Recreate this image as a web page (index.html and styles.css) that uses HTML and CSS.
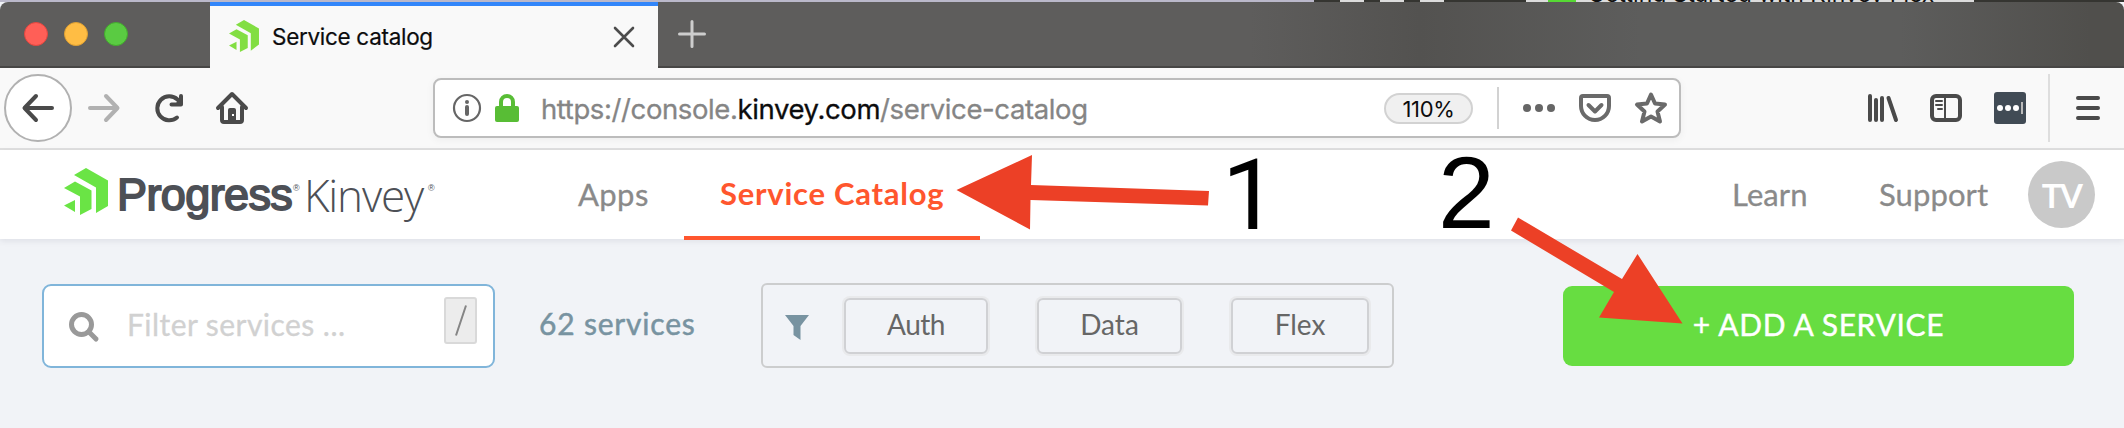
FILE: index.html
```html
<!DOCTYPE html>
<html lang="en">
<head>
<meta charset="utf-8">
<title>Service catalog</title>
<link rel="stylesheet" href="styles.css">
</head>
<body>
<div class="desktop">
  <span class="peek p1"></span><span class="peek p2"></span><span class="peek p3"></span><span class="peek p4"></span>
  <span class="peek-tab"><i class="peek-icon"></i><span class="peek-title">Getting Started with Kinvey Flex</span></span>
  <span class="peek p5"></span>
</div>
<div class="tabs">
  <div class="lights"><i class="light red"></i><i class="light amber"></i><i class="light green"></i></div>
  <div class="tab">
    <svg class="tab-icon" viewBox="0 0 44 47"><path d="M10 7 22 0 44 12.500V36L32 45V19.500ZM0 20 11 13.500 27.500 22.500V41L16 47V28.500ZM0 37.500 11 32V44Z"/></svg>
    <span class="tab-title">Service catalog</span>
    <svg class="tab-close" viewBox="0 0 20 20"><path d="M1 1 19 19M19 1 1 19"/></svg>
  </div>
  <svg class="tab-new" viewBox="0 0 28 28"><path d="M14 1.500V26.500M1.500 14H26.500"/></svg>
</div>
<div class="toolbar">
  <span class="back"><svg class="ico" viewBox="0 0 32 32"><path d="M30 16H3M14 4 2.500 16 14 28"/></svg></span>
  <svg class="ico forward" viewBox="0 0 32 32"><path d="M2 16H29M18 4 29.500 16 18 28"/></svg>
  <svg class="ico reload" viewBox="0 0 32 32"><path d="M24 25.500A12 12 0 1 1 24.500 7.500L28 11"/><path d="M28 4V12.500H18.500"/><path class="solid" d="M28 6V13H21Z"/></svg>
  <svg class="ico home" viewBox="0 0 32 32"><path d="M2 16 16 2 30 16M6 15V28Q6 30 8 30H24Q26 30 26 28V15"/><path class="solid" d="M12 30V18Q12 16 14 16H18Q20 16 20 18V30Z"/><rect class="hole" x="16" y="22" width="2" height="2"/></svg>
  <div class="address">
    <svg class="info" viewBox="0 0 30 30"><circle cx="15" cy="15" r="13"/><path d="M15 14V21"/><circle class="dot" cx="15" cy="9" r="2"/></svg>
    <svg class="lock" viewBox="0 0 24 28"><path d="M6 14V8a6 6 0 0 1 12 0V14"/><rect x="0" y="12" width="24" height="16" rx="2"/></svg>
    <span class="url">https://console.<b>kinvey.com</b>/service-catalog</span>
    <span class="zoom">110%</span>
    <span class="rule"></span>
    <svg class="more" viewBox="0 0 32 8"><circle cx="4" cy="4" r="4"/><circle cx="16" cy="4" r="4"/><circle cx="28" cy="4" r="4"/></svg>
    <svg class="ico grey pocket" viewBox="0 0 32 32"><path d="M4 4H28Q30 4 30 6V14A14 14 0 0 1 2 14V6Q2 4 4 4ZM9.500 13 16 19.500 22.500 13"/></svg>
    <svg class="ico grey star" viewBox="0 0 32 32"><path d="M16 2.500 20 11.500 30 12.500 22.500 19.500 25 29.500 16 24.500 7 29.500 9.500 19.500 2 12.500 12 11.500Z"/></svg>
  </div>
  <svg class="ico library" viewBox="0 0 32 32"><path d="M4 4V28M10 8V28M16 6V28M22.500 6 30 28"/></svg>
  <svg class="ico sidebar" viewBox="0 0 32 32"><rect x="2" y="4" width="28" height="24" rx="4"/><path class="thin" d="M15 4V28M6 9H12M6 13H12M8 17H12"/></svg>
  <svg class="ico pass" viewBox="0 0 32 32"><rect width="32" height="32" rx="3"/><circle cx="6" cy="16" r="3"/><circle cx="14" cy="16" r="3"/><circle cx="22" cy="16" r="3"/><path d="M28 10V22"/></svg>
  <span class="divider"></span>
  <svg class="menu" viewBox="0 0 24 24"><path d="M2 2H22M2 12H22M2 22H22"/></svg>
</div>
<header class="site">
  <svg class="logo" viewBox="0 0 44 47"><path d="M10 7 22 0 44 12.500V38L32 45V19.500ZM0 20 11 13.500 27.500 22.500V41L16 47V28.500ZM0 37.500 11 32V44Z"/></svg>
  <span class="brand">Progress</span><span class="reg">®</span><span class="product">Kinvey</span><span class="reg">®</span>
  <nav class="nav"><a class="link apps">Apps</a><a class="link current">Service Catalog</a></nav>
  <nav class="aside"><a class="link learn">Learn</a><a class="link support">Support</a><span class="avatar">TV</span></nav>
</header>
<main class="filters">
  <div class="search">
    <svg class="glass" viewBox="0 0 30 30"><circle cx="12.500" cy="12.500" r="10"/><path d="M20 20 27 27"/></svg>
    <span class="hint">Filter services ...</span>
    <kbd class="key"><svg viewBox="0 0 12 31"><path d="M11 .5 1 30.500"/></svg></kbd>
  </div>
  <span class="count">62 services</span>
  <div class="group">
    <svg class="funnel" viewBox="0 0 24 25"><path d="M0 0H24L15.500 11V25L8.500 20V11Z"/></svg>
    <span class="chip auth">Auth</span><span class="chip data">Data</span><span class="chip flex">Flex</span>
  </div>
  <span class="add">+ ADD A SERVICE</span>
</main>
<div class="notes">
  <span class="num one">1</span><span class="num two">2</span>
  <svg class="arrows" viewBox="0 0 2124 428"><path d="M956.500 190 1032 155 1031 185 1209 191 1208 205.500 1030.500 200 1030 229.500ZM1518 217.500 1622 279 1637.500 254 1682.500 323.500 1599 317.500 1614 292 1511 230.500Z"/></svg>
</div>
</body>
</html>
```
FILE: styles.css
```css
* { box-sizing: border-box; }
body { margin: 0; width: 2124px; height: 428px; overflow: hidden; background: #f1f3f7; font-family: Lato, sans-serif; position: relative; white-space: nowrap; }
svg { display: block; flex: none; overflow: visible; }

.desktop { height: 2px; overflow: hidden; display: flex; background: linear-gradient(90deg, #bab8ca 1314px, #dcdcdc 1314px); padding-left: 1314px; }
.peek { height: 2px; flex: none; background: #353531; }
.p1 { width: 26px; }
.p2 { width: 16px; margin-left: 24px; }
.p3 { width: 16px; margin-left: 24px; }
.p4 { width: 82px; margin-left: 24px; }
.p5 { flex: 1; }
.peek-tab { display: flex; width: 448px; height: 2px; padding-left: 22px; }
.peek-icon { width: 28px; height: 2px; background: #56d934; }
.peek-title { font: 23px/28px Inter, sans-serif; margin: -20px 0 0 12px; color: #111; }

.tabs { height: 66px; display: flex; align-items: center; background: linear-gradient(90deg, #5e5d5c 0, #5e5d5c 1250px, #535250 1420px, #5d5d5c 1640px, #5d5d5c 1900px, #504f4c 2090px); border-bottom: 2px solid #474645; border-top-left-radius: 8px; border-top-right-radius: 8px; }
.lights { width: 210px; padding-left: 24px; display: flex; gap: 16px; }
.light { width: 24px; height: 24px; border-radius: 50%; }
.red { background: #ff5f57; border: 1px solid #e2463f; }
.amber { background: #ffbd44; border: 1px solid #dfa032; }
.green { background: #5acb42; border: 1px solid #43ab2d; }
.tab { width: 448px; height: 66px; margin-bottom: -2px; background: #f9f9f9; border-top: 4px solid #3286fa; display: flex; align-items: center; padding: 0 24px 0 19px; }
.tab-icon { width: 30px; height: 32px; fill: #82de42; margin-top: -3px; }
.tab-title { width: 341px; margin-left: 13px; font: 22.500px/30px Inter, sans-serif; letter-spacing: -.3px; color: #0c0c0d; -webkit-text-stroke: .2px; }
.tab-close { width: 20px; height: 20px; margin-left: 1px; stroke: #4c4c4c; stroke-width: 2.600; stroke-linecap: round; }
.tab-new { width: 28px; height: 28px; margin-left: 20px; stroke: #cdcdcd; stroke-width: 3; stroke-linecap: round; }

.toolbar { height: 82px; background: #f9f9f9; border-bottom: 2px solid #e0e0e0; display: flex; align-items: center; padding-left: 4px; }
.ico { width: 32px; height: 32px; fill: none; stroke: #4a4a4a; stroke-width: 4; stroke-linecap: round; stroke-linejoin: round; }
.ico .solid { fill: #4a4a4a; stroke: none; }
.ico .hole { fill: #fff; stroke: none; }
.ico .thin { stroke-width: 2; }
.back { width: 68px; height: 68px; border-radius: 50%; border: 2px solid #b1b1b1; background: #fff; display: flex; align-items: center; justify-content: center; }
.forward { margin-left: 16px; stroke: #b1b1b1; }
.reload { margin-left: 33px; }
.home { margin-left: 31px; }
.address { width: 1248px; height: 60px; margin-left: 185px; border: 2px solid #bcbcbc; border-radius: 8px; background: #fff; box-shadow: 0 2px 8px rgba(0,0,0,.05); display: flex; align-items: center; padding-left: 17px; flex: none; }
.info { width: 30px; height: 30px; fill: none; stroke: #666; stroke-width: 2.200; stroke-linecap: round; }
.info path { stroke-width: 4; }
.info .dot { fill: #666; stroke: none; }
.lock { width: 24px; height: 28px; margin-left: 13px; fill: #58bd35; }
.lock path { fill: none; stroke: #58bd35; stroke-width: 4; }
.url { width: 843px; margin: 2px 0 0 22px; font: 27.500px/36px Inter, sans-serif; letter-spacing: -.39px; color: #858585; -webkit-text-stroke: .3px; }
.url b { font-weight: 400; color: #0c0c0d; }
.zoom { width: 89px; height: 31px; border: 2px solid #d2d2d2; border-radius: 16px; background: #f0f0f0; font: 22px/28px Inter, sans-serif; letter-spacing: -.3px; color: #0c0c0d; text-align: center; }
.rule { width: 2px; height: 42px; margin-left: 24px; background: #d2d2d2; }
.more { width: 32px; height: 8px; margin-left: 24px; fill: #666; }
.grey { stroke: #6a6a6a; }
.pocket { margin-left: 24px; }
.star { margin-left: 24px; }
.library { margin-left: 185px; }
.sidebar { margin-left: 32px; }
.pass { margin-left: 32px; fill: #fff; stroke: none; }
.pass rect { fill: #414b55; }
.pass path { stroke: #bbb; stroke-width: 2; stroke-linecap: butt; }
.divider { width: 2px; height: 68px; margin-left: 22px; background: #dedede; flex: none; }
.menu { width: 24px; height: 24px; margin-left: 26px; stroke: #4a4a4a; stroke-width: 4; stroke-linecap: round; }

.site { height: 89px; background: #fff; display: flex; align-items: center; padding-left: 64px; box-shadow: 0 2px 6px rgba(60,60,90,.1); position: relative; color: #8a8a8a; font-size: 30px; line-height: 40px; }
.logo { width: 44px; height: 47px; fill: #6ae445; margin-bottom: 6px; }
.brand { width: 176px; margin-left: 9px; font: 45px/54px "Liberation Sans", sans-serif; letter-spacing: -.6px; color: #4d5056; -webkit-text-stroke: 1.800px #4d5056; }
.reg { width: 8px; font: 9px/12px "Liberation Sans", sans-serif; color: #4d5056; margin-top: -13px; }
.product { width: 124px; margin-left: 3px; font: 300 44px/54px "Open Sans", sans-serif; letter-spacing: -1.200px; color: #4d5056; }
.nav { display: flex; margin-left: 142px; height: 89px; }
.link { display: flex; align-items: center; height: 89px; padding-bottom: 2px; -webkit-text-stroke: .3px; }
.apps { width: 106px; font-size: 31px; letter-spacing: .4px; }
.current { width: 296px; height: 90px; padding: 0 0 0 36px; border-bottom: 4px solid #ff562e; color: #ff562e; font-size: 31px; font-weight: 700; letter-spacing: .75px; -webkit-text-stroke: 0; }
.aside { display: flex; align-items: center; margin-left: 752px; }
.learn { width: 147px; font-size: 31px; letter-spacing: .1px; }
.support { width: 149px; font-size: 31px; letter-spacing: .1px; }
.avatar { width: 67px; height: 67px; border-radius: 50%; background: #c9c9c9; color: #fff; font-size: 33px; letter-spacing: -1.500px; font-weight: 700; display: flex; align-items: center; justify-content: center; }

.filters { display: flex; padding: 44px 0 0 42px; font-size: 30px; line-height: 40px; }
.search { width: 453px; height: 84px; margin-top: 1px; border: 2px solid #80b5da; border-radius: 9px; background: #fff; display: flex; align-items: center; padding-left: 25px; }
.glass { width: 30px; height: 30px; margin-top: 2px; fill: none; stroke: #999; stroke-width: 5; stroke-linecap: round; }
.hint { width: 317px; margin: -4px 0 0 28px; color: #d1d1d1; letter-spacing: .45px; -webkit-text-stroke: .3px; }
.key { width: 33px; height: 47px; margin-top: -12px; border: 2px solid #d9d9d9; border-radius: 3px; background: #ececec; display: flex; align-items: center; justify-content: center; }
.key svg { width: 12px; height: 31px; stroke: #858585; stroke-width: 2; }
.count { width: 222px; margin: 20px 0 0 44px; color: #7893a1; letter-spacing: .8px; -webkit-text-stroke: .5px; }
.group { width: 633px; height: 85px; border: 2px solid #cccdce; border-radius: 6px; display: flex; align-items: center; padding-left: 22px; }
.funnel { width: 24px; height: 25px; margin-top: 4px; fill: #7893a1; }
.chip { height: 56px; border: 2px solid #d0d1d4; border-radius: 6px; box-shadow: 0 0 0 2px #e9eaec; display: flex; align-items: center; justify-content: center; color: #666; font-size: 28px; padding-bottom: 3px; }
.auth { width: 144px; margin-left: 35px; letter-spacing: -.5px; }
.data { width: 145px; margin-left: 49px; }
.flex { width: 138px; margin-left: 49px; }
.add { width: 511px; height: 80px; margin: 3px 0 0 169px; border-radius: 9px; background: #67dd41; color: #fff; letter-spacing: .65px; -webkit-text-stroke: .4px; display: flex; align-items: center; justify-content: center; padding-bottom: 4px; }

.notes { position: absolute; inset: 0; }
.arrows { position: absolute; inset: 0; width: 2124px; height: 428px; fill: #ec4026; }
.num { position: absolute; top: 137px; font: 99px/116px Roboto, sans-serif; color: #000; }
.one { left: 1222px; }
.two { left: 1438px; top: 135px; font-family: "Liberation Sans", sans-serif; font-size: 102px; }
```
